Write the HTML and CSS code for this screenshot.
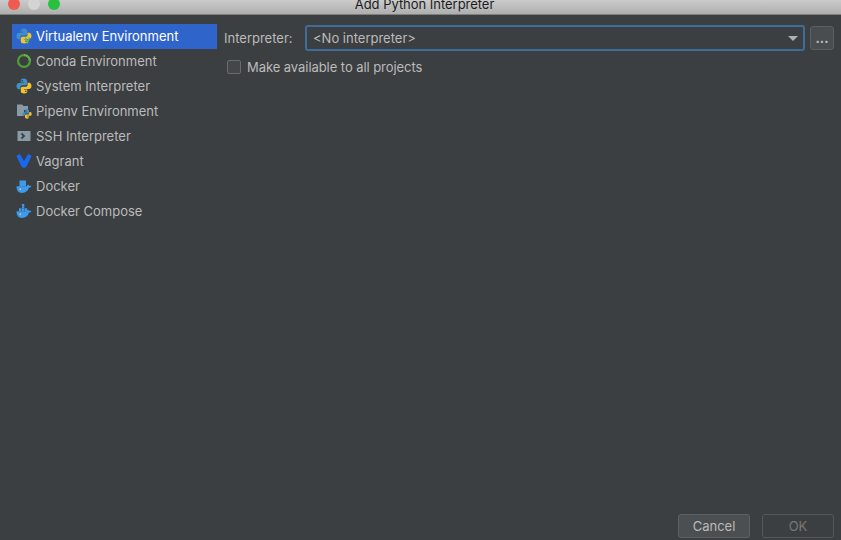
FILE: index.html
```html
<!DOCTYPE html>
<html lang="en">
<head>
<meta charset="utf-8">
<title>Add Python Interpreter</title>
<link rel="stylesheet" href="styles.css">
</head>
<body>
<svg class="defs" width="0" height="0" aria-hidden="true">
  <defs>
    <symbol id="py" viewBox="0 0 16 16">
      <path fill="#3f8fc9" d="M7.800.5C5.200.5 4.700 1.600 4.700 2.800v1.700h3.400v.6H2.900C1.500 5.100.5 6.200.5 8c0 2 1 3.300 2.400 3.300h1.500V9.300C4.400 8 5.400 7.200 6.600 7.200h2.900c1 0 1.700-.8 1.700-1.700V2.800C11.200 1.500 9.800.5 7.800.500zM6.200 1.900a.8.8 0 1 1 0 1.600.8.8 0 0 1 0-1.600z"/>
      <path fill="#f2c331" d="M8.200 15.500c2.600 0 3.100-1.100 3.100-2.300v-1.700H7.900v-.6h5.200c1.400 0 2.400-1.100 2.400-2.900 0-2-1-3.300-2.400-3.300h-1.500v2c0 1.300-1 2.100-2.200 2.100H6.500c-1 0-1.700.8-1.700 1.700v2.700c0 1.300 1.400 2.300 3.400 2.300zm1.600-1.400a.8.8 0 1 1 0-1.600.8.8 0 0 1 0 1.600z"/>
    </symbol>
    <symbol id="whale" viewBox="0 0 16 16">
      <path fill="#3d9be9" d="M.6 8.300h10.200c.2-1 .9-1.500 1.500-1.700.3.500.6.900.7 1.300.8-.2 1.500-.1 2.400.4-.5 1-1.400 1.400-2.500 1.500C12 13 9.700 15 6 15 2.500 15 .4 12.500.6 8.300z"/>
      <circle cx="4.300" cy="11.300" r=".7" fill="#c9e3f8"/>
    </symbol>
  </defs>
</svg>
<header class="titlebar">
  <div class="lights">
    <span class="light light-close"></span>
    <span class="light light-min"></span>
    <span class="light light-max"></span>
  </div>
  <span class="title">Add Python Interpreter</span>
</header>
<main class="dialog">
  <div class="content">
    <ul class="sidebar">
      <li class="item item-selected">
        <svg class="icon" viewBox="0 0 16 16"><use href="#py"/><path d="M9.500 9.500l2 5 2-5" fill="none" stroke="#62b543" stroke-width="1.500"/></svg>
        <span>Virtualenv Environment</span>
      </li>
      <li class="item">
        <svg class="icon" viewBox="0 0 16 16"><circle cx="8" cy="8" r="5.900" fill="none" stroke="#4f9e3c" stroke-width="2.200"/><path d="M8 2.100A5.900 5.900 0 0 1 13.900 8" fill="none" stroke="#6cb552" stroke-width="2.200" stroke-dasharray="1.500 .7"/></svg>
        <span>Conda Environment</span>
      </li>
      <li class="item">
        <svg class="icon"><use href="#py"/></svg>
        <span>System Interpreter</span>
      </li>
      <li class="item">
        <svg class="icon" viewBox="0 0 16 16">
          <path fill="#8a9aa5" d="M1 1.500h5l1.500 1.500H12V7H8v6H1z"/>
          <svg x="6" y="6" width="10" height="10" viewBox="0 0 16 16"><use href="#py"/></svg>
        </svg>
        <span>Pipenv Environment</span>
      </li>
      <li class="item">
        <svg class="icon" viewBox="0 0 16 16"><rect x="1.500" y="3" width="13" height="10" fill="#8a9aa5"/><path d="M5.500 5.500L8 8l-2.500 2.500" fill="none" stroke="#3c3f41" stroke-width="1.800"/></svg>
        <span>SSH Interpreter</span>
      </li>
      <li class="item">
        <svg class="icon" viewBox="0 0 16 16"><path fill="#1868f2" d="M.5 2.800L4 1 8 8.300 12 1l3.500 1.800-1.200 3L9.800 14.500H6.200L1.700 5.800z"/></svg>
        <span>Vagrant</span>
      </li>
      <li class="item">
        <svg class="icon" viewBox="0 0 16 16"><use href="#whale"/><rect x="3.500" y="2.500" width="6.500" height="5.800" fill="#3d9be9"/></svg>
        <span>Docker</span>
      </li>
      <li class="item">
        <svg class="icon" viewBox="0 0 16 16"><use href="#whale"/><path fill="#3d9be9" d="M5.900 1h2.400v2.300H5.900zM3 5.300h2.500v2.700H3zM5.900 5.300h2.400v2.700H5.900zM8.700 5.300h2.400v2.700H8.700zM5.900 3.600h2.400v1.400H5.900z"/></svg>
        <span>Docker Compose</span>
      </li>
    </ul>
    <section class="form">
      <div class="row">
        <label class="label">Interpreter:</label>
        <div class="combo">
          <span>&lt;No interpreter&gt;</span>
          <span class="arrow"></span>
        </div>
        <button class="browse" type="button">...</button>
      </div>
      <label class="check-row">
        <span class="check"></span>
        <span class="check-text">Make available to all projects</span>
      </label>
    </section>
  </div>
  <footer class="footer">
    <button class="btn" type="button">Cancel</button>
    <button class="btn btn-disabled" type="button">OK</button>
  </footer>
</main>
</body>
</html>
```
FILE: styles.css
```css
* { box-sizing: border-box; }
html, body { margin: 0; height: 100%; }
body {
  width: 841px;
  height: 540px;
  overflow: hidden;
  display: flex;
  flex-direction: column;
  background: #3c3f41;
  color: #bbbbbb;
  font-family: Inter, "Liberation Sans", sans-serif;
  font-size: 13px;
}
.defs { position: absolute; }
.titlebar {
  position: relative;
  flex: none;
  height: 15px;
  display: flex;
  justify-content: center;
  align-items: flex-end;
  padding-left: 8px;
  background: linear-gradient(#cbcbcb, #aeaeae);
  border-bottom: 1px solid #7f7f7f;
  overflow: hidden;
}
.title {
  color: #1c1c1c;
  font-size: 13px;
  line-height: 16px;
  margin-bottom: 2px;
  letter-spacing: -0.03px;
}
.lights {
  position: absolute;
  left: 8px;
  top: -2px;
  display: flex;
  gap: 8px;
}
.light { width: 12px; height: 12px; border-radius: 50%; }
.light-close { background: #f05a50; }
.light-min { background: #d4d4d4; }
.light-max { background: #27c03f; }
.dialog {
  flex: 1;
  display: flex;
  flex-direction: column;
  min-height: 0;
}
.content {
  flex: 1;
  display: flex;
  padding: 9px 7px 0 12px;
  gap: 7px;
}
.sidebar {
  list-style: none;
  margin: 0;
  padding: 0;
  width: 205px;
  flex: none;
}
.item {
  height: 25px;
  display: flex;
  align-items: center;
  padding: 0 0 1px 4px;
  gap: 4px;
}
.item-selected { background: #2f65ca; color: #ffffff; }
.icon { width: 16px; height: 16px; flex: none; }
.form { flex: 1; min-width: 0; padding-top: 1px; }
.row { display: flex; align-items: center; height: 26px; gap: 5px; }
.label { width: 76px; flex: none; }
.combo {
  flex: 1;
  height: 26px;
  display: flex;
  align-items: center;
  justify-content: space-between;
  padding: 0 5px 0 6px;
  background: #3c3f41;
  border: 2px solid #406c9c;
  border-radius: 3px;
}
.arrow {
  width: 0;
  height: 0;
  border-left: 5px solid transparent;
  border-right: 5px solid transparent;
  border-top: 5px solid #aeb0b2;
}
.browse {
  width: 24px;
  height: 24px;
  flex: none;
  padding: 0;
  background: #4a4d4f;
  border: 1px solid #5c5f61;
  border-radius: 3px;
  color: #bbbbbb;
  font: inherit;
  font-weight: 700;
}
.check-row {
  display: flex;
  align-items: center;
  gap: 6px;
  margin: 4px 0 0 3px;
  height: 24px;
}
.check {
  width: 14px;
  height: 14px;
  background: #43474a;
  border: 1px solid #6b6b6b;
  border-radius: 2px;
}
.check-text { letter-spacing: -0.06px; }
.footer {
  flex: none;
  display: flex;
  justify-content: flex-end;
  gap: 12px;
  padding: 0 7px 2px 0;
}
.btn {
  width: 72px;
  height: 24px;
  padding: 0;
  background: #4b4f51;
  border: 1px solid #5e6163;
  border-radius: 3px;
  color: #bbbbbb;
  font: inherit;
}
.btn-disabled {
  background: transparent;
  border-color: #55585a;
  color: #777777;
}
```
